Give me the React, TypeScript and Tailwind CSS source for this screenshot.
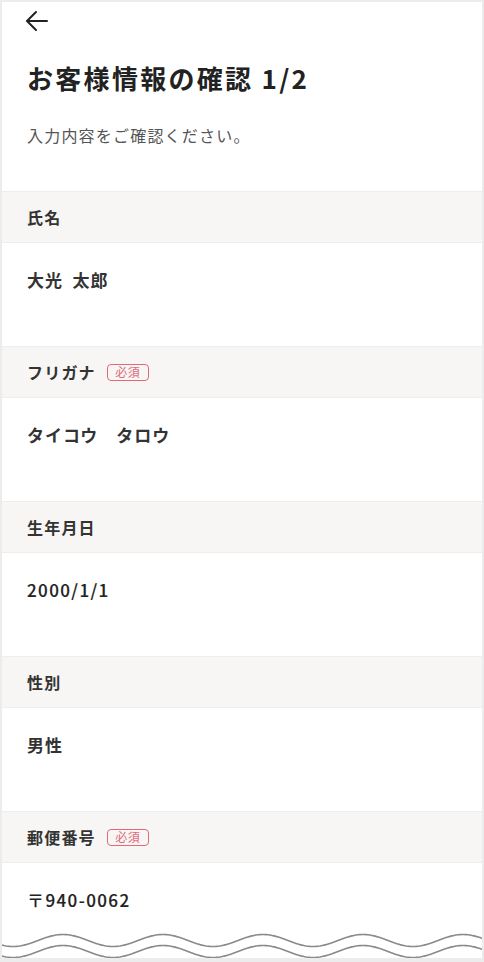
import React from "react";

const font = { fontFamily: '"Noto Sans CJK JP", "Noto Sans", sans-serif' };

function Badge() {
  return (
    <span className="ml-[11px] inline-flex h-[17px] w-[42px] items-center justify-center rounded-[4px] border-[1.5px] border-[#e06a7b] text-[12px] leading-none tracking-[0.5px] text-[#e06a7b]">
      必須
    </span>
  );
}

function Section({
  label,
  value,
  required,
  medium,
}: {
  label: string;
  value: string;
  required?: boolean;
  medium?: boolean;
}) {
  return (
    <div className="flex shrink-0 flex-col">
      <div className="flex h-[52px] shrink-0 items-center border-y border-[#f0eeec] bg-[#f7f6f4] pl-[25px]">
        <span className="text-[16px] font-bold tracking-[1.2px] text-[#333]">{label}</span>
        {required && <Badge />}
      </div>
      <div className="h-[103px] shrink-0 pl-[25px] pt-[25px]">
        <span
          className={
            medium
              ? "whitespace-pre text-[17px] font-medium leading-[24px] tracking-[1.4px] text-[#222] [-webkit-text-stroke:0.15px_#222]"
              : "whitespace-pre text-[17px] font-bold leading-[24px] tracking-[1px] text-[#333]"
          }
        >
          {value}
        </span>
      </div>
    </div>
  );
}

function Wave() {
  const make = (cy: number) => {
    const pts: string[] = [];
    for (let x = -2; x <= 482; x += 2) {
      const y = cy - 6 * Math.cos((2 * Math.PI * (x - 61)) / 100);
      pts.push(`${x},${y.toFixed(2)}`);
    }
    return pts.join(" ");
  };
  return (
    <svg width="480" height="30" viewBox="0 0 480 30" className="block">
      <polyline points={make(12.5)} fill="none" stroke="#8a8a8a" strokeWidth="1.6" />
      <polyline points={make(23.5)} fill="none" stroke="#8a8a8a" strokeWidth="1.6" />
    </svg>
  );
}

export default function App() {
  return (
    <div className="h-[962px] w-[484px] bg-[#ececec] pl-[2px] pr-[2px] pt-[2px]" style={font}>
      <div className="relative h-[956px] overflow-hidden bg-white">
        <div className="flex h-[38px] items-center pl-[23px]">
          <svg width="24" height="22" viewBox="0 0 24 22" fill="none" stroke="#222" strokeWidth="2" strokeLinecap="round" strokeLinejoin="round">
            <path d="M22 11H2.5" />
            <path d="M11 2L2 11l9 9" />
          </svg>
        </div>
        <h1 className="mt-[22px] pl-[25px] text-[26px] font-bold leading-[32px] tracking-[2.3px] text-[#222]">
          お客様情報の確認 1/2
        </h1>
        <p className="mt-[30px] pl-[25px] text-[16px] leading-[22px] tracking-[1.2px] text-[#555]">
          入力内容をご確認ください。
        </p>
        <div className="mt-[45px] flex flex-col">
          <Section label="氏名" value={"大光\u2002太郎"} />
          <Section label="フリガナ" value={"タイコウ　タロウ"} required />
          <Section label="生年月日" value="2000/1/1" medium />
          <Section label="性別" value="男性" />
          <Section label="郵便番号" value="〒940-0062" required medium />
        </div>
        <div className="absolute bottom-0 left-0">
          <Wave />
        </div>
      </div>
    </div>
  );
}
